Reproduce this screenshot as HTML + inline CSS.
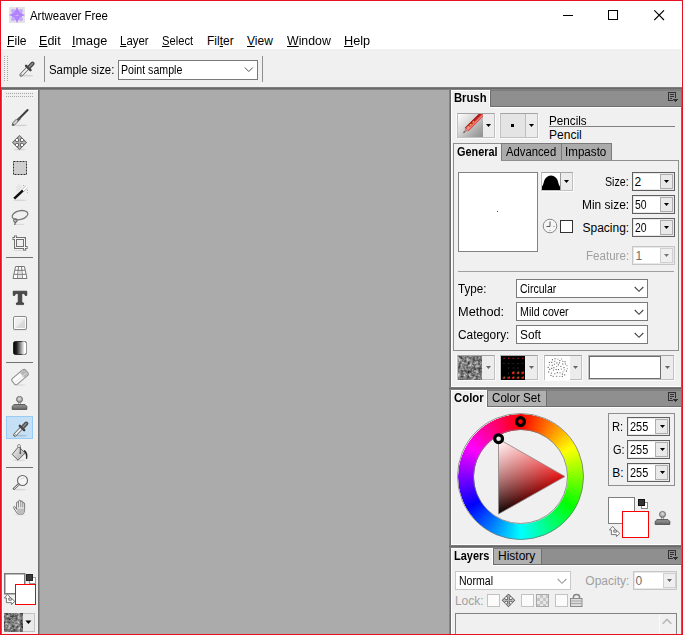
<!DOCTYPE html>
<html><head><meta charset="utf-8">
<style>
*{box-sizing:border-box;margin:0;padding:0}
html,body{width:683px;height:635px;overflow:hidden;background:#fff}
body{font-family:"Liberation Sans",sans-serif;font-size:12px;color:#000;position:relative}
.a{position:absolute}
.t{position:absolute;white-space:nowrap;line-height:14px;height:14px;transform-origin:0 0}
u{text-decoration:underline;text-underline-offset:1px}
#win{position:absolute;left:0;top:0;width:683px;height:635px;border:1px solid #e81123;background:#fff;overflow:hidden}
.menu .t{top:34px}
.combo{position:absolute;background:#fff;border:1px solid #7a7a7a}
.spin{position:absolute;background:#fff;border:1px solid #7a7a7a}
.sbtn{position:absolute;background:#e9e9e9;border:1px solid #adadad}
.tri{position:absolute;width:0;height:0;border-left:3px solid transparent;border-right:3px solid transparent;border-top:3px solid #000}
.tab{position:absolute;background:#f0f0f0}
.phead{position:absolute;left:450px;width:231px;height:17px;background:#8c8c8c}

.b{font-weight:bold}
.dis{color:#a0a0a0}
.band{left:1px;width:681px;height:3px;background:linear-gradient(#7c7c7c 0,#7c7c7c 1px,#696969 1px,#696969 2px,#808080 2px,#808080 3px)}
.hdr{height:17px;background:#8f8f8f;border-left:1px solid #6e6e6e;border-bottom:1px solid #6e6e6e;border-top:1px solid #7e7e7e}
.ibtn{background:#ececec;border:1px solid #c0c0c0;border-top-color:#a4a4a4;box-shadow:1px 1px 0 #fbfbfb,-1px 0 0 #f8f8f8}
.itab{background:#ababab;border:1px solid #7a7a7a;border-bottom:none}
.itab2{background:#b0b0b0;border:1px solid #6e6e6e;border-top-color:#7e7e7e}
.spin{width:43px;height:19px;border:1px solid #5f5f5f;box-shadow:inset 0 0 0 1px #e8e8e8}
.dspin{border-color:#c6c6c6}
.sbtn{width:13px;height:15px}
.dsb{background:#efefef;border-color:#d0d0d0}
.tri.g{border-top-color:#666}
.lcb{width:13px;height:13px;background:#fbfbfb;border:1px solid #c2c2c2}
/*FIT*/
#tTitle{left:30.00px !important;transform:scaleX(0.9503)}
#mFile{left:7.00px !important;transform:scaleX(1.0127)}
#mEdit{left:39.00px !important;transform:scaleX(1.0457)}
#mImage{left:71.97px !important;transform:scaleX(1.0567)}
#mLayer{left:120.00px !important;transform:scaleX(0.9534)}
#mSelect{left:162.15px !important;transform:scaleX(0.9313)}
#mFilter{left:207.00px !important;transform:scaleX(1.0000)}
#mView{left:247.00px !important;transform:scaleX(1.0000)}
#mWindow{left:286.50px !important;transform:scaleX(1.0263)}
#mHelp{left:344.00px !important;transform:scaleX(1.0581)}
#tSample{left:49.10px !important;transform:scaleX(0.9516)}
#vSample{left:121.47px !important;transform:scaleX(0.8838)}
#tBrush{left:453.90px !important;transform:scaleX(0.9373)}
#tPencils{left:548.70px !important;transform:scaleX(0.9746)}
#tPencil{left:549.10px !important;transform:scaleX(1.0000)}
#tGeneral{left:457.34px !important;transform:scaleX(0.9053)}
#tAdvanced{left:506.29px !important;transform:scaleX(0.9400)}
#tImpasto{left:564.87px !important;transform:scaleX(0.9682)}
#tSize{left:604.56px !important;transform:scaleX(0.8865)}
#tMin{left:581.65px !important;transform:scaleX(0.9950)}
#tSpacing{left:582.50px !important;transform:scaleX(1.0000)}
#tFeature{left:585.70px !important;transform:scaleX(0.9653)}
#vSize{left:634.45px !important;transform:scaleX(1.0000)}
#vMin{left:635.00px !important;transform:scaleX(0.8704)}
#vSpacing{left:635.00px !important;transform:scaleX(0.8704)}
#vFeature{left:635.40px !important;transform:scaleX(1.0000)}
#tType{left:458.40px !important;transform:scaleX(0.9679)}
#tMethod{left:457.65px !important;transform:scaleX(1.0644)}
#tCategory{left:458.20px !important;transform:scaleX(0.9875)}
#vType{left:519.73px !important;transform:scaleX(0.8767)}
#vMethod{left:519.95px !important;transform:scaleX(0.8903)}
#vCategory{left:519.80px !important;transform:scaleX(0.9848)}
#tColor{left:453.50px !important;transform:scaleX(0.9488)}
#tColorSet{left:491.73px !important;transform:scaleX(0.9690)}
#tR{left:612.15px !important;transform:scaleX(0.9370)}
#tG{left:613.19px !important;transform:scaleX(0.9142)}
#tB{left:612.15px !important;transform:scaleX(1.0000)}
#vR{left:629.73px !important;transform:scaleX(0.9100)}
#vG{left:629.73px !important;transform:scaleX(0.9100)}
#vB{left:629.73px !important;transform:scaleX(0.9100)}
#tLayers{left:454.10px !important;transform:scaleX(0.9136)}
#tHistory{left:498.00px !important;transform:scaleX(1.0000)}
#vNormal{left:459.07px !important;transform:scaleX(0.8784)}
#tOpacity{left:585.30px !important;transform:scaleX(1.0000)}
#vOpacity{left:635.50px !important;transform:scaleX(1.0000)}
#tLock{left:454.90px !important;transform:scaleX(1.0000)}
/*ENDFIT*/
</style></head><body>
<div id="win"></div>

<!-- title bar -->
<svg class="a" style="left:9px;top:7px" width="16" height="16" viewBox="0 0 16 16"><rect width="16" height="16" fill="#e3e3e3"/><ellipse cx="8" cy="8" rx="7.9" ry="3" transform="rotate(45 8 8)" fill="#c6a8ff"/><ellipse cx="8" cy="8" rx="7.9" ry="3" transform="rotate(-45 8 8)" fill="#c6a8ff"/><path d="M8 0 Q10.4 3.6 10.6 8 Q10.4 12.4 8 16 Q5.6 12.4 5.4 8 Q5.6 3.6 8 0 Z" fill="#b184ff"/><path d="M0 8 Q3.6 5.6 8 5.4 Q12.4 5.6 16 8 Q12.4 10.4 8 10.6 Q3.6 10.4 0 8 Z" fill="#b184ff"/><circle cx="8" cy="8" r="3.7" fill="#b184ff"/><path d="M6 8.7 Q6.6 7.6 7.4 8 Q8 7.2 8.7 8 Q9.6 7.7 10 8.7 Z" fill="#d3bcff"/></svg>
<div class="t" id="tTitle" style="left:30px;top:9px">Artweaver Free</div>
<svg class="a" style="left:563px;top:9px" width="12" height="12"><path d="M0 6.5 H10" stroke="#000" stroke-width="1"/></svg>
<svg class="a" style="left:608px;top:10px" width="12" height="12"><rect x="0.5" y="0.5" width="9" height="9" fill="none" stroke="#000"/></svg>
<svg class="a" style="left:654px;top:10px" width="12" height="12"><path d="M0.3 0.3 L10 10 M10 0.3 L0.3 10" stroke="#000" stroke-width="1.1"/></svg>

<!-- menu -->
<div class="menu">
<div class="t" id="mFile" style="left:8px"><u>F</u>ile</div>
<div class="t" id="mEdit" style="left:40px"><u>E</u>dit</div>
<div class="t" id="mImage" style="left:74px"><u>I</u>mage</div>
<div class="t" id="mLayer" style="left:121px"><u>L</u>ayer</div>
<div class="t" id="mSelect" style="left:163px"><u>S</u>elect</div>
<div class="t" id="mFilter" style="left:208px">Fil<u>t</u>er</div>
<div class="t" id="mView" style="left:248px"><u>V</u>iew</div>
<div class="t" id="mWindow" style="left:287px"><u>W</u>indow</div>
<div class="t" id="mHelp" style="left:345px"><u>H</u>elp</div>
</div>

<!-- toolbar -->
<div class="a" style="left:1px;top:49px;width:680px;height:38px;background:#f0f0f0"></div>
<svg class="a" style="left:4px;top:56px" width="4" height="28"><defs><pattern id="gd" width="3" height="2" patternUnits="userSpaceOnUse"><rect width="1" height="1" fill="#a6a6a6"/></pattern></defs><rect width="4" height="25" fill="url(#gd)"/></svg>
<svg class="a" style="left:0;top:49px" width="45" height="38" viewBox="0 49 45 38"><g transform="translate(6.3,-360)"><ellipse cx="20.5" cy="435.7" rx="6.5" ry="0.9" fill="#d2d2d2"/><path d="M14.9 434.9 L21 428.6" stroke="#6e6e6e" stroke-width="3.6" stroke-linecap="round"/><path d="M15 434.8 L21.2 428.4" stroke="#f6f6f6" stroke-width="1.9" stroke-linecap="round"/><path d="M14.2 435.7 L15.3 434.4" stroke="#555" stroke-width="1"/><path d="M19.8 425.8 L24.2 430.2" stroke="#3e3e3e" stroke-width="2.4" stroke-linecap="round"/><path d="M22.7 427.3 L26.3 423.5" stroke="#4a4a4a" stroke-width="4" stroke-linecap="round"/><path d="M23.2 426.8 L26.2 423.6" stroke="#8c8c8c" stroke-width="1.5" stroke-linecap="round"/></g></svg>
<div class="a" style="left:44px;top:56px;width:1px;height:26px;background:#8e8e8e"></div>
<div class="a" style="left:262px;top:56px;width:1px;height:26px;background:#8e8e8e"></div>
<div class="t" id="tSample" style="left:50px;top:63px">Sample size:</div>
<div class="combo" style="left:118px;top:60px;width:140px;height:20px"></div>
<div class="t" id="vSample" style="left:122px;top:63px">Point sample</div>
<svg class="a" style="left:244px;top:66px" width="10" height="8"><path d="M0.8 1.5 L4.8 5.5 L8.8 1.5" fill="none" stroke="#555" stroke-width="1"/></svg>

<!-- workspace -->
<div class="a" style="left:1px;top:87px;width:681px;height:547px;background:#ababab"></div>
<div class="a" style="left:1px;top:87px;width:681px;height:1px;background:#8a8a8a"></div>
<div class="a" style="left:1px;top:88px;width:681px;height:1px;background:#6b6b6b"></div>

<!-- left tool panel -->
<div class="a" style="left:1px;top:89px;width:1px;height:545px;background:#707070"></div>
<div class="a" style="left:2px;top:90px;width:36px;height:544px;background:#f0f0f0;border-left:1px solid #fff;border-top:1px solid #fff"></div>
<div class="a" style="left:38px;top:89px;width:1px;height:545px;background:#6e6e6e"></div>
<div class="a" style="left:39px;top:89px;width:1px;height:545px;background:#8c8c8c"></div>
<div class="a" style="left:6px;top:416px;width:27px;height:23px;background:#c5dff5;border:1px solid #99cbf5"></div>
<svg class="a" style="left:0;top:0" width="41" height="635" viewBox="0 0 41 635">
<defs>
<pattern id="dots" x="6" y="93" width="2" height="3" patternUnits="userSpaceOnUse"><rect width="1" height="1" fill="#a4a4a4"/></pattern>
<linearGradient id="gbw" x1="0" x2="1" y1="0" y2="0"><stop offset="0" stop-color="#000"/><stop offset="0.25" stop-color="#222"/><stop offset="0.85" stop-color="#fff"/></linearGradient>
<linearGradient id="gsh" x1="0" x2="1" y1="0" y2="1"><stop offset="0" stop-color="#f4f4f4"/><stop offset="0.5" stop-color="#ececec"/><stop offset="0.55" stop-color="#dcdcdc"/><stop offset="1" stop-color="#d2d2d2"/></linearGradient>
<linearGradient id="gst" x1="0" x2="0" y1="0" y2="1"><stop offset="0" stop-color="#9a9a9a"/><stop offset="1" stop-color="#666"/></linearGradient>
<radialGradient id="gball" cx="0.5" cy="0.4" r="0.6"><stop offset="0" stop-color="#e6e6e6"/><stop offset="1" stop-color="#8a8a8a"/></radialGradient>
<linearGradient id="gbk" x1="0" x2="1" y1="0" y2="1"><stop offset="0" stop-color="#f2f2f2"/><stop offset="1" stop-color="#a8a8a8"/></linearGradient>
<filter id="noise" x="0" y="0" width="100%" height="100%" color-interpolation-filters="sRGB"><feTurbulence type="fractalNoise" baseFrequency="0.34" numOctaves="3" seed="11"/><feColorMatrix type="matrix" values="1.0 0 0 0 -0.02  1.0 0 0 0 -0.02  1.0 0 0 0 -0.02  0 0 0 0 1"/></filter>
</defs>
<!-- gripper -->
<rect x="6" y="93" width="28" height="1" fill="url(#dots)"/>
<rect x="6" y="96" width="28" height="1" fill="url(#dots)"/>
<!-- brush -->
<ellipse cx="21" cy="125.4" rx="6.5" ry="0.9" fill="#d4d4d4"/>
<path d="M27.6 110 L17 120.8" stroke="#3f3f3f" stroke-width="2" stroke-linecap="round"/>
<path d="M20 118 L16.4 121.4" stroke="#555" stroke-width="2.6"/>
<path d="M17 120 L13.6 123.6" stroke="#cfcfcf" stroke-width="3"/>
<path d="M16.3 119.2 L12.6 123 L12.2 125.4 L14.6 125 L18.3 121.3" fill="none" stroke="#555" stroke-width="0.8"/>
<path d="M12.2 125.6 L14.8 125.2 L13 123.4 Z" fill="#444"/>
<!-- move -->
<ellipse cx="19.5" cy="149.6" rx="6.5" ry="0.8" fill="#d9d9d9"/>
<path d="M19.5 135 L27 142.5 L19.5 150 L12 142.5 Z" fill="#5e5e5e"/>
<path d="M19.5 136.6 L19.5 148.4 M13.6 142.5 L25.4 142.5" stroke="#b0b0b0" stroke-width="1.3"/>
<path d="M19.5 136.2 L21.6 138.6 H17.4 Z M19.5 148.8 L21.6 146.4 H17.4 Z M13.2 142.5 L15.6 140.4 V144.6 Z M25.8 142.5 L23.4 140.4 V144.6 Z" fill="#bcbcbc"/>
<rect x="16" y="139" width="2" height="2" fill="#fff"/><rect x="21" y="139" width="2" height="2" fill="#fff"/><rect x="16" y="144" width="2" height="2" fill="#fff"/><rect x="21" y="144" width="2" height="2" fill="#fff"/>
<!-- select -->
<rect x="13.5" y="161.5" width="13" height="13" fill="#cfcfcf" stroke="#2e2e2e" stroke-width="1" stroke-dasharray="2 1"/>
<!-- wand -->
<ellipse cx="20" cy="200.2" rx="7" ry="0.8" fill="#d6d6d6"/>
<path d="M14.2 198.6 L23 190.4" stroke="#111" stroke-width="2.6"/>
<path d="M23 190.4 L26.6 187" stroke="#fff" stroke-width="2.6"/>
<path d="M22.2 189.4 L25.8 186 M23.8 191.4 L27.4 188" stroke="#888" stroke-width="0.6"/>
<path d="M19 184.6 L19.6 186.6 L21.4 187.2 L19.6 187.8 L19 189.8 L18.4 187.8 L16.6 187.2 L18.4 186.6 Z" fill="#fff" stroke="#bbb" stroke-width="0.4"/>
<path d="M17.2 189 L17.5 190 L18.5 190.3 L17.5 190.6 L17.2 191.6 L16.9 190.6 L15.9 190.3 L16.9 190 Z" fill="#fff" stroke="#ccc" stroke-width="0.3"/>
<rect x="23" y="185" width="1" height="1" fill="#aaa"/><rect x="27" y="190" width="1" height="1" fill="#aaa"/><rect x="27" y="192" width="1" height="1" fill="#bbb"/>
<!-- lasso -->
<path d="M14 224.4 H24" stroke="#d0d0d0" stroke-width="0.8"/>
<ellipse cx="20" cy="215.2" rx="8" ry="4.4" transform="rotate(-14 20 215.2)" fill="none" stroke="#777" stroke-width="1.3"/>
<circle cx="15.4" cy="220.4" r="1.7" fill="none" stroke="#666" stroke-width="1.1"/>
<path d="M15.4 221.8 L14.8 225" stroke="#666" stroke-width="1.2"/>
<!-- crop -->
<path d="M13.5 250.5 H27" stroke="#d4d4d4" stroke-width="0.8"/>
<path d="M12.5 238.5 H24.5 V250.4" fill="none" stroke="#707070" stroke-width="3"/>
<path d="M15.5 235.6 V247.5 H27.6" fill="none" stroke="#707070" stroke-width="3"/>
<path d="M13.3 238.5 H24.5 V249.6" fill="none" stroke="#f6f6f6" stroke-width="1"/>
<path d="M15.5 236.4 V247.5 H26.8" fill="none" stroke="#f6f6f6" stroke-width="1"/>
<!-- sep -->
<rect x="6" y="257" width="27" height="1" fill="#727272"/>
<!-- perspective grid -->
<path d="M15.6 266.5 H24.4 L27 278.5 H13 Z" fill="#fff" stroke="#777" stroke-width="1"/>
<path d="M14.8 270.3 H25.2 M14 274.3 H26" stroke="#777" stroke-width="1"/>
<path d="M18.5 266.5 L17.4 278.5 M21.5 266.5 L22.6 278.5" stroke="#777" stroke-width="1"/>
<rect x="18.4" y="271" width="3.2" height="2.8" fill="#ddd"/><rect x="17.8" y="275" width="4.4" height="3" fill="#e4e4e4"/>
<!-- T -->
<path d="M13.2 291.2 H26.8 V295.4 H25.2 L24.4 293.6 H21.8 V302.6 L23.6 303 V304.6 H16.4 V303 L18.2 302.6 V293.6 H15.6 L14.8 295.4 H13.2 Z" fill="#4a4a4a" stroke="#2e2e2e" stroke-width="0.7" stroke-linejoin="round"/>
<!-- shape -->
<path d="M13 329.8 H27" stroke="#c8c8c8" stroke-width="0.8"/>
<rect x="13.5" y="316.5" width="13" height="13" rx="1.5" fill="url(#gsh)" stroke="#888" stroke-width="1"/>
<rect x="14.5" y="317.5" width="11" height="11" rx="0.8" fill="none" stroke="#fdfdfd" stroke-width="1"/>
<!-- gradient -->
<rect x="13.5" y="341.5" width="13" height="13" rx="1.8" fill="url(#gbw)" stroke="#111" stroke-width="0.8"/>
<path d="M22 341.5 H25 Q26.5 341.5 26.5 343 V353 Q26.5 354.5 25 354.5 H22" fill="none" stroke="#aaa" stroke-width="0.8"/>
<!-- sep -->
<rect x="6" y="362" width="27" height="1" fill="#727272"/>
<!-- eraser -->
<ellipse cx="19.5" cy="385" rx="6.5" ry="0.8" fill="#dcdcdc"/>
<g transform="rotate(-40 20 377)"><rect x="11.3" y="373.2" width="17.4" height="7.6" rx="2.2" fill="#fafafa" stroke="#8a8a8a" stroke-width="1"/><path d="M22.6 373.7 H26.4 Q28.2 373.7 28.2 375.6 V378.4 Q28.2 380.3 26.4 380.3 H22.6 Z" fill="#b9b9b9"/><path d="M12 378 H28" stroke="#ddd" stroke-width="0.8"/></g>
<!-- stamp -->
<rect x="18.6" y="401.6" width="1.8" height="3.6" fill="#e8e8e8" stroke="#777" stroke-width="0.6"/>
<circle cx="19.5" cy="399.4" r="3" fill="url(#gball)" stroke="#6a6a6a" stroke-width="0.9"/>
<path d="M14 404.6 H25 L26.8 406.4 V409.4 H12.2 V406.4 Z" fill="url(#gst)" stroke="#4c4c4c" stroke-width="0.9" stroke-linejoin="round"/>
<!-- eyedropper (selected) -->
<ellipse cx="20.5" cy="435.7" rx="6.5" ry="0.9" fill="#a8c0d6"/><path d="M14.9 434.9 L21 428.6" stroke="#6e6e6e" stroke-width="3.6" stroke-linecap="round"/><path d="M15 434.8 L21.2 428.4" stroke="#f6f6f6" stroke-width="1.9" stroke-linecap="round"/><path d="M14.2 435.7 L15.3 434.4" stroke="#555" stroke-width="1"/><path d="M19.8 425.8 L24.2 430.2" stroke="#3e3e3e" stroke-width="2.4" stroke-linecap="round"/><path d="M22.7 427.3 L26.3 423.5" stroke="#4a4a4a" stroke-width="4" stroke-linecap="round"/><path d="M23.2 426.8 L26.2 423.6" stroke="#8c8c8c" stroke-width="1.5" stroke-linecap="round"/>
<!-- bucket -->
<ellipse cx="19" cy="460.4" rx="6.5" ry="0.8" fill="#dcdcdc"/>
<path d="M24.2 450 C27 451.5 28 454 27.2 458.8 L26 459 C26.2 455 25.6 453.2 23.6 451.6 Z" fill="#2c2c2c"/>
<path d="M18.6 446.6 L25.2 453 L18 460.2 L12.2 454.4 Z" fill="url(#gbk)" stroke="#666" stroke-width="1" stroke-linejoin="round"/>
<circle cx="19" cy="446" r="1.5" fill="#fafafa" stroke="#777" stroke-width="0.8"/>
<path d="M20.3 447 V452.6" stroke="#555" stroke-width="1.1"/><circle cx="20.3" cy="453" r="0.9" fill="#555"/>
<!-- sep -->
<rect x="6" y="467" width="27" height="1" fill="#727272"/>
<!-- zoom -->
<ellipse cx="20" cy="489.6" rx="6.5" ry="0.8" fill="#d8d8d8"/>
<circle cx="22.5" cy="480.5" r="5" fill="#f6f6f6" stroke="#666" stroke-width="1.1"/>
<path d="M20.4 479.4 Q21.4 477.8 24.4 478" fill="none" stroke="#c8c8c8" stroke-width="0.8"/>
<path d="M18.6 484.4 L13.8 488.8" stroke="#666" stroke-width="2.4" stroke-linecap="round"/>
<path d="M18.4 484.8 L14.2 488.6" stroke="#f0f0f0" stroke-width="0.9" stroke-linecap="round"/>
<!-- hand -->
<ellipse cx="20" cy="514.6" rx="5.5" ry="0.7" fill="#d8d8d8"/>
<path d="M16.6 509.4 V503 Q16.6 501.8 17.6 501.8 Q18.6 501.8 18.6 503 V501.4 Q18.6 500.2 19.7 500.2 Q20.8 500.2 20.8 501.4 V502 Q20.8 501 21.8 501 Q22.8 501 22.8 502.2 V503.4 Q22.8 502.6 23.7 502.6 Q24.6 502.6 24.6 503.8 V509.6 Q24.6 513.8 22.4 514 H18.6 Q17 513.6 15.6 511 L13.6 507.8 Q13.4 506.6 14.4 506.4 Q15.2 506.4 16.6 509.4 Z" fill="#f4f4f4" stroke="#6a6a6a" stroke-width="0.9" stroke-linejoin="round"/>
<path d="M18.6 503 V507.5 M20.8 502 V507.5 M22.8 503.4 V507.5" stroke="#6a6a6a" stroke-width="0.8"/>
<path d="M17 508.6 H24.2 V510 Q24.2 513.4 22.2 513.6 H18.8 Q17.6 513 17 511.6 Z" fill="#bdbdbd"/>
<!-- colours -->
<rect x="29.5" y="577.5" width="6" height="6" fill="#fff" stroke="#9a9a9a" stroke-width="1"/>
<rect x="26.5" y="574.5" width="6" height="6" fill="#3a3a3a" stroke="#222" stroke-width="1"/>
<rect x="4.75" y="573.75" width="20" height="20" fill="#fff" stroke="#7a7a7a" stroke-width="1.5"/>
<rect x="15.5" y="584.5" width="20" height="20" fill="#fff" stroke="#f80000" stroke-width="1"/>
<path transform="translate(-605,68)" d="M612.6 526.4 L615.8 530 L613.8 530 L613.8 532.2 L616.4 532.2 L616.4 530.2 L619.8 533.4 L616.4 536.6 L616.4 534.6 L611.4 534.6 L611.4 530 L609.4 530 Z" fill="#fdfdfd" stroke="#6a6a6a" stroke-width="0.9" stroke-linejoin="round"/>
<!-- pattern button -->
<rect x="4.5" y="613.5" width="30" height="18" fill="#e9e9e9" stroke="#c2c2c2" stroke-width="1"/>
<rect x="4" y="613" width="19" height="19" fill="#8d8d8d"/>
<rect x="4" y="613" width="19" height="19" filter="url(#noise)"/>
<path d="M25.4 620.6 H31.4 L28.4 624 Z" fill="#000"/>
</svg>

<!-- right dock -->
<div class="a" style="left:449px;top:89px;width:1px;height:545px;background:#858585"></div>
<div class="a" style="left:450px;top:89px;width:1px;height:545px;background:#6b6b6b"></div>
<div class="a" style="left:451px;top:89px;width:230px;height:545px;background:#f0f0f0"></div>
<div class="a" style="left:451px;top:90px;width:1px;height:544px;background:#fff"></div>
<div class="a" style="left:681px;top:87px;width:1px;height:547px;background:#6c7474"></div>
<!-- dark bands -->
<div class="a band" style="top:87px"></div>
<div class="a band" style="top:387px;left:449px;width:233px"></div>
<div class="a band" style="top:545px;left:449px;width:233px"></div>
<div class="a" style="left:451px;top:386px;width:229px;height:1px;background:#fff"></div>
<div class="a" style="left:451px;top:544px;width:229px;height:1px;background:#fff"></div>

<!-- ===== Brush panel ===== -->
<div class="a hdr" style="left:490px;top:90px;width:191px"></div>
<div class="a" style="left:451px;top:90px;width:39px;height:1px;background:#fff"></div>
<div class="a" style="left:489px;top:90px;width:1px;height:17px;background:#fff"></div>
<div class="a" style="left:490px;top:107px;width:191px;height:1px;background:#fff"></div>
<div class="t b" id="tBrush" style="left:455px;top:91px">Brush</div>
<svg class="a" style="left:668px;top:92px" width="10" height="10" shape-rendering="crispEdges"><g fill="#303030"><rect x="0" y="0" width="8" height="1"/><rect x="0" y="0" width="1" height="9"/><rect x="7" y="0" width="1" height="6"/><rect x="0" y="8" width="5" height="1"/><rect x="2" y="2" width="4" height="1"/><rect x="2" y="4" width="4" height="1"/><rect x="2" y="6" width="2" height="1"/><rect x="5" y="7" width="5" height="1"/><rect x="6" y="8" width="3" height="1"/><rect x="7" y="9" width="1" height="1"/></g></svg>

<!-- brush category button -->
<div class="a ibtn" style="left:457px;top:113px;width:38px;height:25px"></div>
<div class="a" style="left:458px;top:114px;width:24.5px;height:23px;background:linear-gradient(135deg,#fdfdfd 0%,#d8d8d8 40%,#a8a8a8 75%,#8e8e8e 100%)"></div>
<svg class="a" style="left:458px;top:114px" width="24.5" height="23" viewBox="0 0 24.5 23"><defs><filter id="pb" x="-10%" y="-10%" width="120%" height="120%"><feGaussianBlur stdDeviation="0.45"/></filter></defs><g filter="url(#pb)"><path d="M5.3 19 L7.4 14.4 L9.9 16.9 Z" fill="#b98d7c"/><path d="M5 19.3 L6 17 L7.3 18.3 Z" fill="#555"/><path d="M7 13.8 L25 -4.2 L28.4 -0.8 L10.4 17.2 Z" fill="#d23030"/><path d="M7 13.8 L25 -4.2 L26.2 -3 L8.2 15 Z" fill="#a81a1a"/><path d="M9 15.8 L27 -2.2 L28 -1.2 L10 16.8 Z" fill="#ef8078"/><path d="M8 14 L10 16 L12.4 13.6 L10.4 11.6 Z" fill="#f29088"/><path d="M11.6 11.6 L13.4 9.8 M14.6 8.6 L16 7.2" stroke="#f5c050" stroke-width="1.2"/></g></svg>
<svg class="a" style="left:486px;top:124px" width="5" height="3"><path d="M0 0H5L2.5 3Z" fill="#000"/></svg>
<!-- brush variant button -->
<div class="a ibtn" style="left:500px;top:113px;width:38px;height:25px"></div>
<div class="a" style="left:501px;top:114px;width:25px;height:23px;background:#e4e4e4"></div>
<div class="a" style="left:525px;top:114px;width:1px;height:23px;background:#bdbdbd"></div>
<div class="a" style="left:511px;top:124px;width:3px;height:3px;background:#000"></div>
<svg class="a" style="left:529px;top:124px" width="5" height="3"><path d="M0 0H5L2.5 3Z" fill="#000"/></svg>
<div class="t" id="tPencils" style="left:549px;top:114px">Pencils</div>
<div class="a" style="left:549px;top:126px;width:126px;height:1px;background:#7f7f7f"></div>
<div class="t" id="tPencil" style="left:549px;top:128px">Pencil</div>

<!-- tabs -->
<div class="a" style="left:453px;top:160px;width:226px;height:191px;border:1px solid #8e8e8e;background:#f0f0f0"></div>
<div class="a" style="left:453px;top:143px;width:49px;height:18px;background:#f0f0f0;border:1px solid #8e8e8e;border-bottom:none"></div>
<div class="a itab" style="left:501px;top:143px;width:61px;height:17px"></div>
<div class="a itab" style="left:561px;top:143px;width:51px;height:17px"></div>
<div class="t b" id="tGeneral" style="left:458px;top:145px">General</div>
<div class="t" id="tAdvanced" style="left:506px;top:145px">Advanced</div>
<div class="t" id="tImpasto" style="left:565px;top:145px">Impasto</div>

<!-- preview -->
<div class="a" style="left:458px;top:172px;width:80px;height:80px;background:#fff;border:1px solid #828282"></div>
<div class="a" style="left:496.8px;top:210.6px;width:1.5px;height:1.5px;background:#444"></div>
<!-- shape button -->
<div class="a ibtn" style="left:541px;top:172px;width:32px;height:19px"></div>
<svg class="a" style="left:542px;top:173px" width="18" height="17" viewBox="0 0 18 17"><rect width="18" height="17" fill="#fff"/><path d="M0 17 V13.5 C1.6 12.5 1.6 8 3.4 5.6 C5 3.4 7 2.4 9 2.4 C11 2.4 13 3.4 14.6 5.6 C16.4 8 16.4 12.5 18 13.5 V17 Z" fill="#000"/></svg>
<div class="a" style="left:560px;top:173px;width:1px;height:17px;background:#9a9a9a"></div>
<svg class="a" style="left:564px;top:180px" width="5" height="3"><path d="M0 0H5L2.5 3Z" fill="#000"/></svg>
<!-- clock + checkbox -->
<svg class="a" style="left:542px;top:218px" width="16" height="16" viewBox="0 0 16 16"><circle cx="8" cy="8" r="6.8" fill="#f6f6f6" stroke="#8a8a8a" stroke-width="1"/><path d="M8 3.5 V8.5 H4.5" fill="none" stroke="#555" stroke-width="1"/><path d="M11.5 8.5 H12.5 M8 12 V12.8" stroke="#777" stroke-width="1"/></svg>
<div class="a" style="left:560px;top:220px;width:13px;height:13px;background:#fff;border:1px solid #333"></div>

<!-- spinners -->
<div class="t" id="tSize" style="left:605px;top:175px">Size:</div>
<div class="spin" style="left:632px;top:172px"></div><div class="sbtn" style="left:660px;top:174px"></div><svg class="a" style="left:664px;top:180px" width="5" height="3"><path d="M0 0H5L2.5 3Z" fill="#000"/></svg>
<div class="t" id="vSize" style="left:635px;top:175px">2</div>
<div class="t" id="tMin" style="left:583px;top:198px">Min size:</div>
<div class="spin" style="left:632px;top:195px"></div><div class="sbtn" style="left:660px;top:197px"></div><svg class="a" style="left:664px;top:203px" width="5" height="3"><path d="M0 0H5L2.5 3Z" fill="#000"/></svg>
<div class="t" id="vMin" style="left:635px;top:198px">50</div>
<div class="t" id="tSpacing" style="left:583px;top:221px">Spacing:</div>
<div class="spin" style="left:632px;top:218px"></div><div class="sbtn" style="left:660px;top:220px"></div><svg class="a" style="left:664px;top:226px" width="5" height="3"><path d="M0 0H5L2.5 3Z" fill="#000"/></svg>
<div class="t" id="vSpacing" style="left:635px;top:221px">20</div>
<div class="t dis" id="tFeature" style="left:587px;top:249px">Feature:</div>
<div class="spin dspin" style="left:632px;top:246px"></div><div class="sbtn dsb" style="left:660px;top:248px"></div><svg class="a" style="left:664px;top:254px" width="5" height="3"><path d="M0 0H5L2.5 3Z" fill="#777"/></svg>
<div class="t dis" id="vFeature" style="left:635px;top:249px;color:#6d6d6d">1</div>

<div class="a" style="left:458px;top:271px;width:216px;height:1px;background:#a0a0a0"></div>
<!-- combos -->
<div class="t" id="tType" style="left:458px;top:282px">Type:</div>
<div class="combo" style="left:516px;top:279px;width:132px;height:19px"></div>
<div class="t" id="vType" style="left:520px;top:282px">Circular</div>
<svg class="a chev" style="left:634px;top:286px" width="10" height="7"><path d="M0.7 1 L5 5.3 L9.3 1" fill="none" stroke="#444" stroke-width="1.1"/></svg>
<div class="t" id="tMethod" style="left:458px;top:305px">Method:</div>
<div class="combo" style="left:516px;top:302px;width:132px;height:19px"></div>
<div class="t" id="vMethod" style="left:520px;top:305px">Mild cover</div>
<svg class="a chev" style="left:634px;top:309px" width="10" height="7"><path d="M0.7 1 L5 5.3 L9.3 1" fill="none" stroke="#444" stroke-width="1.1"/></svg>
<div class="t" id="tCategory" style="left:458px;top:328px">Category:</div>
<div class="combo" style="left:516px;top:325px;width:132px;height:19px"></div>
<div class="t" id="vCategory" style="left:520px;top:328px">Soft</div>
<svg class="a chev" style="left:634px;top:332px" width="10" height="7"><path d="M0.7 1 L5 5.3 L9.3 1" fill="none" stroke="#444" stroke-width="1.1"/></svg>

<!-- texture buttons -->
<div class="a ibtn" style="left:457px;top:355px;width:38px;height:25px"></div>
<svg class="a" style="left:458px;top:356px" width="24" height="24"><defs><filter id="nz2" x="0" y="0" width="100%" height="100%" color-interpolation-filters="sRGB"><feTurbulence type="fractalNoise" baseFrequency="0.34" numOctaves="3" seed="3"/><feColorMatrix type="matrix" values="1.0 0 0 0 -0.02  1.0 0 0 0 -0.02  1.0 0 0 0 -0.02  0 0 0 0 1"/></filter></defs><rect width="24" height="24" fill="#888" filter="url(#nz2)"/></svg>
<svg class="a" style="left:486px;top:366px" width="5" height="3"><path d="M0 0H5L2.5 3Z" fill="#666"/></svg>
<div class="a ibtn" style="left:500px;top:355px;width:38px;height:25px"></div>
<svg class="a" style="left:501px;top:356px" width="24" height="24" viewBox="501 356 24 24"><rect x="501" y="356" width="24" height="24" fill="#000"/><rect x="503.4" y="357.8" width="1.2" height="1.2" fill="#c01818"/><rect x="508.0" y="357.8" width="1.2" height="1.2" fill="#c01818"/><rect x="512.6" y="357.8" width="1.2" height="1.2" fill="#c01818"/><rect x="517.4" y="357.8" width="1.2" height="1.2" fill="#c01818"/><rect x="522.0" y="357.8" width="1.2" height="1.2" fill="#c01818"/><rect x="503.3" y="363.0" width="1.4" height="0.9" fill="#3a3030"/><rect x="507.9" y="363.0" width="1.4" height="0.9" fill="#3a3030"/><rect x="512.5" y="363.0" width="1.4" height="0.9" fill="#3a3030"/><rect x="517.3" y="363.0" width="1.4" height="0.9" fill="#3a3030"/><rect x="521.9" y="363.0" width="1.4" height="0.9" fill="#3a3030"/><rect x="508.1" y="367.5" width="1" height="1" fill="#3c3c3c"/><rect x="512.7" y="367.5" width="1" height="1" fill="#3c3c3c"/><rect x="517.5" y="367.5" width="1" height="1" fill="#3c3c3c"/><rect x="508.1" y="372.7" width="1" height="1" fill="#444"/><rect x="512.0" y="371.8" width="2.4" height="2.4" fill="#d01c1c"/><rect x="513.4" y="371.6" width="1" height="1" fill="#50b040"/><rect x="516.8" y="371.8" width="2.4" height="2.4" fill="#d01c1c"/><rect x="518.2" y="371.6" width="1" height="1" fill="#50b040"/><rect x="521.4" y="371.8" width="2.4" height="2.4" fill="#d01c1c"/><rect x="522.8" y="371.6" width="1" height="1" fill="#50b040"/><rect x="502.8" y="376.8" width="2.4" height="2" fill="#d01c1c"/><rect x="504.2" y="376.6" width="1" height="1" fill="#50b040"/><rect x="507.4" y="376.8" width="2.4" height="2" fill="#d01c1c"/><rect x="508.8" y="376.6" width="1" height="1" fill="#50b040"/><rect x="512.0" y="376.8" width="2.4" height="2" fill="#d01c1c"/><rect x="513.4" y="376.6" width="1" height="1" fill="#50b040"/><rect x="516.8" y="376.8" width="2.4" height="2" fill="#d01c1c"/><rect x="518.2" y="376.6" width="1" height="1" fill="#50b040"/><rect x="521.4" y="376.8" width="2.4" height="2" fill="#d01c1c"/><rect x="522.8" y="376.6" width="1" height="1" fill="#50b040"/></svg>
<svg class="a" style="left:529px;top:366px" width="5" height="3"><path d="M0 0H5L2.5 3Z" fill="#666"/></svg>
<div class="a ibtn" style="left:544px;top:355px;width:38px;height:25px"></div>
<svg class="a" style="left:545px;top:356px" width="25" height="24" viewBox="545 356 25 24"><rect x="545" y="356" width="25" height="24" fill="#fff"/><rect x="559.5" y="372.3" width="1.1" height="1.1" fill="#777"/><rect x="561.8" y="375.9" width="1.1" height="1.1" fill="#666"/><rect x="547.6" y="366.8" width="1.1" height="1.1" fill="#555"/><rect x="565.9" y="370.5" width="1.1" height="1.1" fill="#555"/><rect x="556.4" y="362.4" width="1.1" height="1.1" fill="#666"/><rect x="557.9" y="369.0" width="1.1" height="1.1" fill="#666"/><rect x="552.6" y="375.8" width="1.1" height="1.1" fill="#666"/><rect x="562.3" y="360.7" width="1.1" height="1.1" fill="#777"/><rect x="559.3" y="360.0" width="1.1" height="1.1" fill="#666"/><rect x="551.2" y="361.8" width="1.1" height="1.1" fill="#555"/><rect x="564.9" y="363.5" width="1.1" height="1.1" fill="#777"/><rect x="554.2" y="360.8" width="1.1" height="1.1" fill="#777"/><rect x="553.0" y="369.6" width="1.1" height="1.1" fill="#777"/><rect x="553.8" y="363.7" width="1.1" height="1.1" fill="#777"/><rect x="563.4" y="367.1" width="1.1" height="1.1" fill="#555"/><rect x="553.3" y="367.1" width="1.1" height="1.1" fill="#666"/><rect x="550.9" y="372.6" width="1.1" height="1.1" fill="#777"/><rect x="548.8" y="364.3" width="1.1" height="1.1" fill="#999"/><rect x="559.2" y="375.9" width="1.1" height="1.1" fill="#999"/><rect x="566.7" y="368.2" width="1.1" height="1.1" fill="#999"/><rect x="556.1" y="365.9" width="1.1" height="1.1" fill="#999"/><rect x="556.8" y="372.1" width="1.1" height="1.1" fill="#555"/><rect x="554.2" y="373.2" width="1.1" height="1.1" fill="#777"/><rect x="562.5" y="371.4" width="1.1" height="1.1" fill="#999"/><rect x="560.3" y="365.9" width="1.1" height="1.1" fill="#777"/><rect x="554.5" y="358.2" width="1.1" height="1.1" fill="#666"/><rect x="557.9" y="364.3" width="1.1" height="1.1" fill="#666"/><rect x="549.2" y="368.8" width="1.1" height="1.1" fill="#555"/><rect x="566.4" y="365.1" width="1.1" height="1.1" fill="#999"/><rect x="562.2" y="363.5" width="1.1" height="1.1" fill="#666"/><rect x="556.1" y="375.8" width="1.1" height="1.1" fill="#777"/><rect x="555.6" y="369.0" width="1.1" height="1.1" fill="#666"/><rect x="561.0" y="358.5" width="1.1" height="1.1" fill="#999"/><rect x="548.1" y="371.4" width="1.1" height="1.1" fill="#555"/><rect x="551.7" y="364.9" width="1.1" height="1.1" fill="#666"/><rect x="558.9" y="362.3" width="1.1" height="1.1" fill="#666"/><rect x="551.9" y="359.2" width="1.1" height="1.1" fill="#555"/><rect x="551.2" y="367.8" width="1.1" height="1.1" fill="#555"/><rect x="560.8" y="368.6" width="1.1" height="1.1" fill="#999"/><rect x="557.3" y="358.6" width="1.1" height="1.1" fill="#999"/><rect x="548.8" y="361.9" width="1.1" height="1.1" fill="#666"/><rect x="564.1" y="374.3" width="1.1" height="1.1" fill="#555"/><rect x="563.7" y="369.4" width="1.1" height="1.1" fill="#999"/><rect x="550.4" y="374.9" width="1.1" height="1.1" fill="#666"/><rect x="561.9" y="373.6" width="1.1" height="1.1" fill="#555"/><rect x="564.5" y="361.2" width="1.1" height="1.1" fill="#555"/></svg>
<svg class="a" style="left:573px;top:366px" width="5" height="3"><path d="M0 0H5L2.5 3Z" fill="#666"/></svg>
<div class="a ibtn" style="left:588px;top:355px;width:86px;height:25px"></div>
<div class="a" style="left:589px;top:356px;width:72px;height:23px;background:#fff;border:1px solid #6e6e6e"></div>
<svg class="a" style="left:665px;top:366px" width="5" height="3"><path d="M0 0H5L2.5 3Z" fill="#666"/></svg>

<!-- ===== Color panel ===== -->
<div class="a hdr" style="left:487px;top:390px;width:194px"></div>
<div class="a" style="left:451px;top:390px;width:36px;height:1px;background:#fff"></div>
<div class="a" style="left:486px;top:390px;width:1px;height:17px;background:#fff"></div>
<div class="a" style="left:487px;top:407px;width:194px;height:1px;background:#fff"></div>
<div class="a itab2" style="left:487px;top:390px;width:60px;height:17px"></div>
<div class="t b" id="tColor" style="left:454px;top:391px">Color</div>
<div class="t" id="tColorSet" style="left:492px;top:391px">Color Set</div>
<svg class="a" style="left:668px;top:392px" width="10" height="10" shape-rendering="crispEdges"><g fill="#303030"><rect x="0" y="0" width="8" height="1"/><rect x="0" y="0" width="1" height="9"/><rect x="7" y="0" width="1" height="6"/><rect x="0" y="8" width="5" height="1"/><rect x="2" y="2" width="4" height="1"/><rect x="2" y="4" width="4" height="1"/><rect x="2" y="6" width="2" height="1"/><rect x="5" y="7" width="5" height="1"/><rect x="6" y="8" width="3" height="1"/><rect x="7" y="9" width="1" height="1"/></g></svg>

<!-- color wheel -->
<div class="a" style="left:457.5px;top:413.5px;width:126px;height:126px;border-radius:50%;background:conic-gradient(from 0deg,#ff0000,#ffff00,#00ff00,#00ffff,#0000ff,#ff00ff,#ff0000);-webkit-mask:radial-gradient(circle,transparent 46.5px,#000 47.3px,#000 62.5px,transparent 63.2px);mask:radial-gradient(circle,transparent 46.5px,#000 47.3px,#000 62.5px,transparent 63.2px)"></div>
<svg class="a" style="left:457px;top:413px" width="127" height="127" viewBox="457 413 127 127">
<defs>
<linearGradient id="gw" gradientUnits="userSpaceOnUse" x1="498.5" y1="439" x2="531.8" y2="496"><stop offset="0" stop-color="#fff" stop-opacity="1"/><stop offset="1" stop-color="#fff" stop-opacity="0"/></linearGradient>
<linearGradient id="gk" gradientUnits="userSpaceOnUse" x1="498.5" y1="514" x2="531.8" y2="457"><stop offset="0" stop-color="#000" stop-opacity="1"/><stop offset="1" stop-color="#000" stop-opacity="0"/></linearGradient>
</defs>
<circle cx="520.5" cy="476.5" r="63" fill="none" stroke="#7a7a7a" stroke-width="1" opacity="0.8"/>
<circle cx="520.5" cy="476.5" r="47" fill="none" stroke="#7a7a7a" stroke-width="1" opacity="0.8"/>
<polygon points="498.5,439 498.5,514 565,476.5" fill="#e81010"/>
<polygon points="498.5,439 498.5,514 565,476.5" fill="url(#gk)"/>
<polygon points="498.5,439 498.5,514 565,476.5" fill="url(#gw)"/>
<polygon points="498.5,439 498.5,514 565,476.5" fill="none" stroke="#8f8f8f" stroke-width="0.8"/>
<circle cx="520.5" cy="421.6" r="3.9" fill="none" stroke="#000" stroke-width="3.2"/>
<circle cx="498.6" cy="438.7" r="3.9" fill="#e8e8e8" stroke="#000" stroke-width="3.2"/>
</svg>

<!-- RGB -->
<div class="a" style="left:608px;top:413px;width:67px;height:73px;border:1px solid #8e8e8e"></div>
<div class="t" id="tR" style="left:613px;top:420px">R:</div>
<div class="spin" style="left:627px;top:417px"></div><div class="sbtn" style="left:655px;top:419px"></div><svg class="a" style="left:659.5px;top:425px" width="5" height="3"><path d="M0 0H5L2.5 3Z" fill="#000"/></svg>
<div class="t" id="vR" style="left:630px;top:420px">255</div>
<div class="t" id="tG" style="left:613px;top:443px">G:</div>
<div class="spin" style="left:627px;top:440px"></div><div class="sbtn" style="left:655px;top:442px"></div><svg class="a" style="left:659.5px;top:448px" width="5" height="3"><path d="M0 0H5L2.5 3Z" fill="#000"/></svg>
<div class="t" id="vG" style="left:630px;top:443px">255</div>
<div class="t" id="tB" style="left:613px;top:466px">B:</div>
<div class="spin" style="left:627px;top:463px"></div><div class="sbtn" style="left:655px;top:465px"></div><svg class="a" style="left:659.5px;top:471px" width="5" height="3"><path d="M0 0H5L2.5 3Z" fill="#000"/></svg>
<div class="t" id="vB" style="left:630px;top:466px">255</div>

<!-- fg/bg -->
<div class="a" style="left:608px;top:497px;width:27px;height:27px;background:#fff;border:1px solid #7f7f7f"></div>
<div class="a" style="left:622px;top:511px;width:27px;height:27px;background:#fff;border:1px solid #f80000"></div>
<div class="a" style="left:641px;top:502px;width:7px;height:7px;background:#fff;border:1px solid #8a8a8a"></div>
<div class="a" style="left:638px;top:499px;width:7px;height:7px;background:#333;border:1px solid #111"></div>
<svg class="a" style="left:607px;top:524px" width="16" height="16" viewBox="607 524 16 16"><path d="M612.6 526.4 L615.8 530 L613.8 530 L613.8 532.2 L616.4 532.2 L616.4 530.2 L619.8 533.4 L616.4 536.6 L616.4 534.6 L611.4 534.6 L611.4 530 L609.4 530 Z" fill="#fdfdfd" stroke="#6a6a6a" stroke-width="0.9" stroke-linejoin="round"/></svg>
<svg class="a" style="left:653px;top:510px" width="20" height="18" viewBox="10 395 20 18"><defs><linearGradient id="gst2" x1="0" x2="0" y1="0" y2="1"><stop offset="0" stop-color="#9a9a9a"/><stop offset="1" stop-color="#666"/></linearGradient><radialGradient id="gball2" cx="0.5" cy="0.4" r="0.6"><stop offset="0" stop-color="#e6e6e6"/><stop offset="1" stop-color="#8a8a8a"/></radialGradient></defs><rect x="18.6" y="401.6" width="1.8" height="3.6" fill="#e8e8e8" stroke="#777" stroke-width="0.6"/><circle cx="19.5" cy="399.4" r="3" fill="url(#gball2)" stroke="#6a6a6a" stroke-width="0.9"/><path d="M14 404.6 H25 L26.8 406.4 V409.4 H12.2 V406.4 Z" fill="url(#gst2)" stroke="#4c4c4c" stroke-width="0.9" stroke-linejoin="round"/></svg>

<!-- ===== Layers panel ===== -->
<div class="a hdr" style="left:493px;top:548px;width:188px"></div>
<div class="a" style="left:451px;top:548px;width:42px;height:1px;background:#fff"></div>
<div class="a" style="left:492px;top:548px;width:1px;height:17px;background:#fff"></div>
<div class="a" style="left:493px;top:565px;width:188px;height:1px;background:#fff"></div>
<div class="a itab2" style="left:493px;top:548px;width:49px;height:17px"></div>
<div class="t b" id="tLayers" style="left:455px;top:549px">Layers</div>
<div class="t" id="tHistory" style="left:498px;top:549px">History</div>
<svg class="a" style="left:668px;top:550px" width="10" height="10" shape-rendering="crispEdges"><g fill="#303030"><rect x="0" y="0" width="8" height="1"/><rect x="0" y="0" width="1" height="9"/><rect x="7" y="0" width="1" height="6"/><rect x="0" y="8" width="5" height="1"/><rect x="2" y="2" width="4" height="1"/><rect x="2" y="4" width="4" height="1"/><rect x="2" y="6" width="2" height="1"/><rect x="5" y="7" width="5" height="1"/><rect x="6" y="8" width="3" height="1"/><rect x="7" y="9" width="1" height="1"/></g></svg>

<div class="combo" style="left:455px;top:571px;width:116px;height:19px;border-color:#c8c8c8"></div>
<div class="t" id="vNormal" style="left:459px;top:574px">Normal</div>
<svg class="a chev" style="left:557px;top:578px" width="10" height="7"><path d="M0.7 1 L5 5.3 L9.3 1" fill="none" stroke="#a0a0a0" stroke-width="1.1"/></svg>
<div class="t dis" id="tOpacity" style="left:586px;top:574px">Opacity:</div>
<div class="spin dspin" style="left:633px;top:571px;width:44px"></div><div class="sbtn dsb" style="left:663px;top:573px"></div><svg class="a" style="left:667px;top:579px" width="5" height="3"><path d="M0 0H5L2.5 3Z" fill="#666"/></svg>
<div class="t dis" id="vOpacity" style="left:636px;top:574px;color:#6d6d6d">0</div>
<div class="t dis" id="tLock" style="left:455px;top:594px">Lock:</div>
<div class="a lcb" style="left:487px;top:594px"></div>
<div class="a lcb" style="left:521px;top:594px"></div>
<div class="a lcb" style="left:555px;top:594px"></div>
<svg class="a" style="left:501px;top:594px" width="15" height="14" viewBox="11.25 135.5 16.5 15.4"><path d="M19.5 135 L27 142.5 L19.5 150 L12 142.5 Z" fill="#5e5e5e"/><path d="M19.5 136.6 L19.5 148.4 M13.6 142.5 L25.4 142.5" stroke="#b0b0b0" stroke-width="1.3"/><path d="M19.5 136.2 L21.6 138.6 H17.4 Z M19.5 148.8 L21.6 146.4 H17.4 Z M13.2 142.5 L15.6 140.4 V144.6 Z M25.8 142.5 L23.4 140.4 V144.6 Z" fill="#bcbcbc"/><rect x="16" y="139" width="2" height="2" fill="#fff"/><rect x="21" y="139" width="2" height="2" fill="#fff"/><rect x="16" y="144" width="2" height="2" fill="#fff"/><rect x="21" y="144" width="2" height="2" fill="#fff"/></svg>
<div class="a" style="left:536px;top:594px;width:13px;height:13px;border:1px solid #a8a8a8;background-color:#e6e6e6;background-image:linear-gradient(45deg,#c4c4c4 25%,transparent 25%,transparent 75%,#c4c4c4 75%),linear-gradient(45deg,#c4c4c4 25%,transparent 25%,transparent 75%,#c4c4c4 75%);background-size:6px 6px;background-position:0 0,3px 3px"></div>
<svg class="a" style="left:570px;top:593px" width="13" height="14" viewBox="0 0 13 14"><path d="M3.5 6 V3.8 C3.5 0.6 9.5 0.6 9.5 3.8 V6" fill="none" stroke="#858585" stroke-width="1.5"/><rect x="0.5" y="5.5" width="11.5" height="8" fill="#dcdcdc" stroke="#8a8a8a" stroke-width="1"/><path d="M1 8 H11.5 M1 10.5 H11.5" stroke="#a6a6a6" stroke-width="1"/></svg>
<div class="a" style="left:455px;top:613px;width:222px;height:25px;border:1px solid #828282;background:#f0f0f0"></div>
<div class="a" style="left:659px;top:614px;width:17px;height:20px;background:#f0f0f0;border-left:1px solid #fafafa"></div>
<svg class="a" style="left:662px;top:618px" width="10" height="7"><path d="M0.7 5.8 L5 1.5 L9.3 5.8" fill="none" stroke="#b8b8b8" stroke-width="1.6"/></svg>

<!-- window border on top -->
<div class="a" style="left:0;top:0;width:683px;height:635px;border:1px solid #e81123;pointer-events:none"></div>
</body></html>
